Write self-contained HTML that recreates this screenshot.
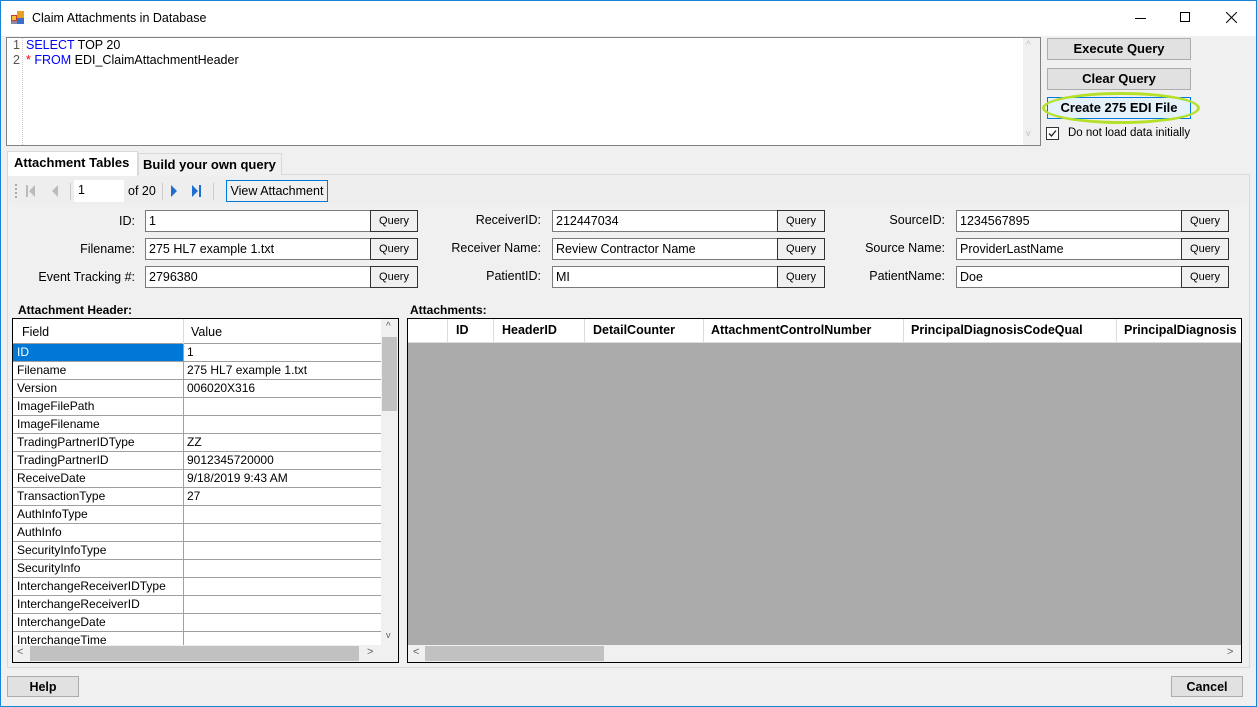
<!DOCTYPE html>
<html><head><meta charset="utf-8"><style>
*{box-sizing:border-box;margin:0;padding:0}
body{width:1257px;height:707px;overflow:hidden;background:#f0f0f0;font-family:"Liberation Sans",Arial,sans-serif;font-size:12px;color:#000;position:relative}
.a{position:absolute}
.btn{position:absolute;background:#e1e1e1;border:1px solid #adadad;font-weight:bold;font-size:13px;text-align:center;line-height:20px}
.lbl{position:absolute;text-align:right;font-size:12.5px;color:#000}
.inp{position:absolute;background:#fff;border:1px solid #7a7a7a;height:22px;padding-left:3px;line-height:20px;font-size:12.5px}
.q{position:absolute;background:#f0f0f0;border:1px solid #333;height:22px;width:48px;text-align:center;font-size:11px;line-height:20px}
.row{position:absolute;left:13px;width:368px;height:18px;border-bottom:1px solid #a0a0a0;background:#fff;font-size:12px;line-height:17px}
.row span{position:absolute;top:0}
.row .f{left:4px}
.row .v{left:174px}
.row .d{position:absolute;left:170px;top:0;width:1px;height:18px;background:#a0a0a0}
.hc{position:absolute;top:0;height:23px;border-right:1px solid #dcdcdc;font-weight:bold;font-size:12.5px;line-height:23px;padding-left:8px;white-space:nowrap;color:#000}
</style></head><body>
<!-- window border -->
<div class="a" style="left:0;top:0;width:1257px;height:707px;border:1px solid #1883d7"></div>
<!-- title bar -->
<div class="a" style="left:1px;top:1px;width:1255px;height:35px;background:#fff"></div>
<svg class="a" style="left:11px;top:11px" width="14" height="14"><rect x="0" y="4" width="6" height="6" fill="#d03a2a"/><rect x="1" y="5" width="4" height="4" fill="#f0c040"/><rect x="6" y="0" width="7" height="7" fill="#e8a020"/><rect x="6" y="7" width="7" height="6" fill="#3a70c8"/><rect x="0" y="10" width="6" height="3" fill="#88a"/></svg>
<div class="a" style="left:32px;top:11px;font-size:12.5px">Claim Attachments in Database</div>
<div class="a" style="left:1135px;top:18px;width:11px;height:1px;background:#000"></div>
<div class="a" style="left:1180px;top:12px;width:10px;height:10px;border:1px solid #000"></div>
<svg class="a" style="left:1226px;top:12px" width="11" height="11"><path d="M0 0L11 11M11 0L0 11" stroke="#000" stroke-width="1"/></svg>

<!-- SQL editor -->
<div class="a" style="left:6px;top:37px;width:1035px;height:109px;background:#fff;border:1px solid #828282"></div>
<div class="a" style="left:22px;top:38px;width:0;height:107px;border-left:1px dotted #c8c8c8"></div>
<div class="a" style="left:13px;top:38px;font-size:12.5px;color:#555;line-height:15px">1<br>2</div>
<div class="a" style="left:26px;top:38px;font-size:12.5px;line-height:15px"><span style="color:#0000ff">SELECT</span> TOP 20<br><span style="color:#e00">*</span> <span style="color:#0000ff">FROM</span> EDI_ClaimAttachmentHeader</div>
<div class="a" style="left:1023px;top:38px;width:17px;height:107px;background:#f0f0f0"></div>
<div class="a" style="left:1026px;top:40px;color:#c0c0c0;font-size:10px">^</div>
<div class="a" style="left:1026px;top:128px;color:#c0c0c0;font-size:9px">v</div>

<!-- right buttons -->
<div class="btn" style="left:1047px;top:38px;width:144px;height:22px">Execute Query</div>
<div class="btn" style="left:1047px;top:68px;width:144px;height:22px">Clear Query</div>
<div class="btn" style="left:1047px;top:97px;width:144px;height:22px;background:#e5f1fb;border-color:#0078d7">Create 275 EDI File</div>
<div class="a" style="left:1042px;top:92px;width:158px;height:32px;border:3px solid #b5e02a;border-radius:50%"></div>
<div class="a" style="left:1046px;top:127px;width:13px;height:13px;background:#fff;border:1px solid #333"></div>
<svg class="a" style="left:1047px;top:128px" width="11" height="11"><path d="M2 5.5L4.5 8L9 2.5" stroke="#222" stroke-width="1.3" fill="none"/></svg>
<div class="a" style="left:1068px;top:127px;font-size:11.5px">Do not load data initially</div>

<!-- tabs -->
<div class="a" style="left:7px;top:174px;width:1243px;height:494px;border:1px solid #d9d9d9;background:#f0f0f0"></div>
<div class="a" style="left:138px;top:153px;width:144px;height:22px;border:1px solid #d9d9d9;border-bottom:none;background:#f0f0f0;font-weight:bold;font-size:13px;padding:3px 0 0 4px">Build your own query</div>
<div class="a" style="left:7px;top:151px;width:131px;height:25px;border:1px solid #d9d9d9;border-bottom:none;background:#fff;font-weight:bold;font-size:13px;padding:3px 0 0 6px">Attachment Tables</div>

<!-- toolbar -->
<div class="a" style="left:9px;top:176px;width:1238px;height:29px;background:#eeeeee"></div>
<div class="a" style="left:15px;top:184px;width:2px;height:14px;border-left:2px dotted #aaa"></div>
<svg class="a" style="left:25px;top:184px" width="50" height="14"><rect x="1" y="1" width="2" height="12" fill="#bbb"/><path d="M10 1L4 7L10 13Z" fill="#bbb"/><path d="M33 1L27 7L33 13Z" fill="#bbb"/></svg>
<div class="a" style="left:70px;top:183px;width:1px;height:17px;background:#ccc"></div>
<div class="a" style="left:74px;top:180px;width:50px;height:22px;background:#fff;padding:3px 0 0 4px;font-size:12.5px">1</div>
<div class="a" style="left:128px;top:184px;font-size:12.5px">of 20</div>
<div class="a" style="left:162px;top:183px;width:1px;height:17px;background:#ccc"></div>
<svg class="a" style="left:168px;top:184px" width="40" height="14"><path d="M3 1L9 7L3 13Z" fill="#1e6fd0"/><path d="M24 1L30 7L24 13Z" fill="#1e6fd0"/><rect x="31" y="1" width="2" height="12" fill="#1e6fd0"/></svg>
<div class="a" style="left:213px;top:183px;width:1px;height:17px;background:#ccc"></div>
<div class="a" style="left:226px;top:180px;width:102px;height:22px;border:1px solid #0078d7;background:#f0f0f0;text-align:center;line-height:20px;font-size:12.5px">View Attachment</div>

<!-- fields -->
<div class="lbl" style="left:20px;top:214px;width:115px">ID:</div>
<div class="inp" style="left:145px;top:210px;width:226px">1</div><div class="q" style="left:370px;top:210px">Query</div>
<div class="lbl" style="left:20px;top:242px;width:115px">Filename:</div>
<div class="inp" style="left:145px;top:238px;width:226px">275 HL7 example 1.txt</div><div class="q" style="left:370px;top:238px">Query</div>
<div class="lbl" style="left:20px;top:270px;width:115px">Event Tracking #:</div>
<div class="inp" style="left:145px;top:266px;width:226px">2796380</div><div class="q" style="left:370px;top:266px">Query</div>

<div class="lbl" style="left:420px;top:213px;width:121px">ReceiverID:</div>
<div class="inp" style="left:552px;top:210px;width:226px">212447034</div><div class="q" style="left:777px;top:210px">Query</div>
<div class="lbl" style="left:420px;top:241px;width:121px">Receiver Name:</div>
<div class="inp" style="left:552px;top:238px;width:226px">Review Contractor Name</div><div class="q" style="left:777px;top:238px">Query</div>
<div class="lbl" style="left:420px;top:269px;width:121px">PatientID:</div>
<div class="inp" style="left:552px;top:266px;width:226px">MI</div><div class="q" style="left:777px;top:266px">Query</div>

<div class="lbl" style="left:830px;top:213px;width:115px">SourceID:</div>
<div class="inp" style="left:956px;top:210px;width:226px">1234567895</div><div class="q" style="left:1181px;top:210px">Query</div>
<div class="lbl" style="left:830px;top:241px;width:115px">Source Name:</div>
<div class="inp" style="left:956px;top:238px;width:226px">ProviderLastName</div><div class="q" style="left:1181px;top:238px">Query</div>
<div class="lbl" style="left:830px;top:269px;width:115px">PatientName:</div>
<div class="inp" style="left:956px;top:266px;width:226px">Doe</div><div class="q" style="left:1181px;top:266px">Query</div>

<!-- left grid -->
<div class="a" style="left:18px;top:303px;font-weight:bold;font-size:12px">Attachment Header:</div>
<div class="a" style="left:12px;top:318px;width:387px;height:345px;border:1px solid #000;background:#fff"></div>
<div class="a" style="left:13px;top:319px;width:368px;height:25px;background:#fff;border-bottom:1px solid #a0a0a0"></div>
<div class="a" style="left:183px;top:319px;width:1px;height:25px;background:#dcdcdc"></div>
<div class="a" style="left:22px;top:325px;font-size:12.5px">Field</div>
<div class="a" style="left:191px;top:325px;font-size:12.5px">Value</div>
<div class="row" style="top:344px"><div class="a" style="left:0;top:0;width:170px;height:17px;background:#0078d7"></div><span class="f" style="color:#fff">ID</span><div class="d"></div><span class="v">1</span></div>
<div class="row" style="top:362px"><span class="f">Filename</span><div class="d"></div><span class="v">275 HL7 example 1.txt</span></div>
<div class="row" style="top:380px"><span class="f">Version</span><div class="d"></div><span class="v">006020X316</span></div>
<div class="row" style="top:398px"><span class="f">ImageFilePath</span><div class="d"></div></div>
<div class="row" style="top:416px"><span class="f">ImageFilename</span><div class="d"></div></div>
<div class="row" style="top:434px"><span class="f">TradingPartnerIDType</span><div class="d"></div><span class="v">ZZ</span></div>
<div class="row" style="top:452px"><span class="f">TradingPartnerID</span><div class="d"></div><span class="v">9012345720000</span></div>
<div class="row" style="top:470px"><span class="f">ReceiveDate</span><div class="d"></div><span class="v">9/18/2019 9:43 AM</span></div>
<div class="row" style="top:488px"><span class="f">TransactionType</span><div class="d"></div><span class="v">27</span></div>
<div class="row" style="top:506px"><span class="f">AuthInfoType</span><div class="d"></div></div>
<div class="row" style="top:524px"><span class="f">AuthInfo</span><div class="d"></div></div>
<div class="row" style="top:542px"><span class="f">SecurityInfoType</span><div class="d"></div></div>
<div class="row" style="top:560px"><span class="f">SecurityInfo</span><div class="d"></div></div>
<div class="row" style="top:578px"><span class="f">InterchangeReceiverIDType</span><div class="d"></div></div>
<div class="row" style="top:596px"><span class="f">InterchangeReceiverID</span><div class="d"></div></div>
<div class="row" style="top:614px"><span class="f">InterchangeDate</span><div class="d"></div></div>
<div class="row" style="top:632px;height:13px;overflow:hidden;border-bottom:none"><span class="f">InterchangeTime</span><div class="d"></div></div>
<div class="a" style="left:381px;top:319px;width:17px;height:326px;background:#f0f0f0"></div>
<div class="a" style="left:382px;top:337px;width:15px;height:74px;background:#c1c1c1"></div>
<div class="a" style="left:386px;top:321px;font-size:10px;color:#606060">^</div>
<div class="a" style="left:386px;top:630px;font-size:9px;color:#606060">v</div>
<div class="a" style="left:13px;top:645px;width:385px;height:17px;background:#f0f0f0"></div>
<div class="a" style="left:30px;top:646px;width:329px;height:15px;background:#c1c1c1"></div>
<div class="a" style="left:17px;top:646px;font-size:11px;color:#606060">&lt;</div>
<div class="a" style="left:367px;top:646px;font-size:11px;color:#606060">&gt;</div>

<!-- right grid -->
<div class="a" style="left:410px;top:303px;font-weight:bold;font-size:12px">Attachments:</div>
<div class="a" style="left:407px;top:318px;width:835px;height:345px;border:1px solid #000;background:#ababab;overflow:hidden">
  <div class="a" style="left:0;top:0;width:833px;height:24px;background:#fff;border-bottom:1px solid #dcdcdc"></div>
  <div class="hc" style="left:0;width:40px"></div>
  <div class="hc" style="left:40px;width:46px">ID</div>
  <div class="hc" style="left:86px;width:91px">HeaderID</div>
  <div class="hc" style="left:177px;width:119px">DetailCounter</div>
  <div class="hc" style="left:296px;width:200px;padding-left:7px">AttachmentControlNumber</div>
  <div class="hc" style="left:496px;width:213px;padding-left:7px">PrincipalDiagnosisCodeQual</div>
  <div class="hc" style="left:709px;width:200px;padding-left:7px;border:none">PrincipalDiagnosis</div>
  <div class="a" style="left:0;top:326px;width:833px;height:17px;background:#f0f0f0"></div>
  <div class="a" style="left:17px;top:327px;width:179px;height:15px;background:#c1c1c1"></div>
  <div class="a" style="left:5px;top:327px;font-size:11px;color:#606060">&lt;</div>
  <div class="a" style="left:819px;top:327px;font-size:11px;color:#606060">&gt;</div>
</div>

<!-- bottom buttons -->
<div class="btn" style="left:7px;top:676px;width:72px;height:21px;font-size:12.5px">Help</div>
<div class="btn" style="left:1171px;top:676px;width:72px;height:21px;font-size:12.5px">Cancel</div>
</body></html>
